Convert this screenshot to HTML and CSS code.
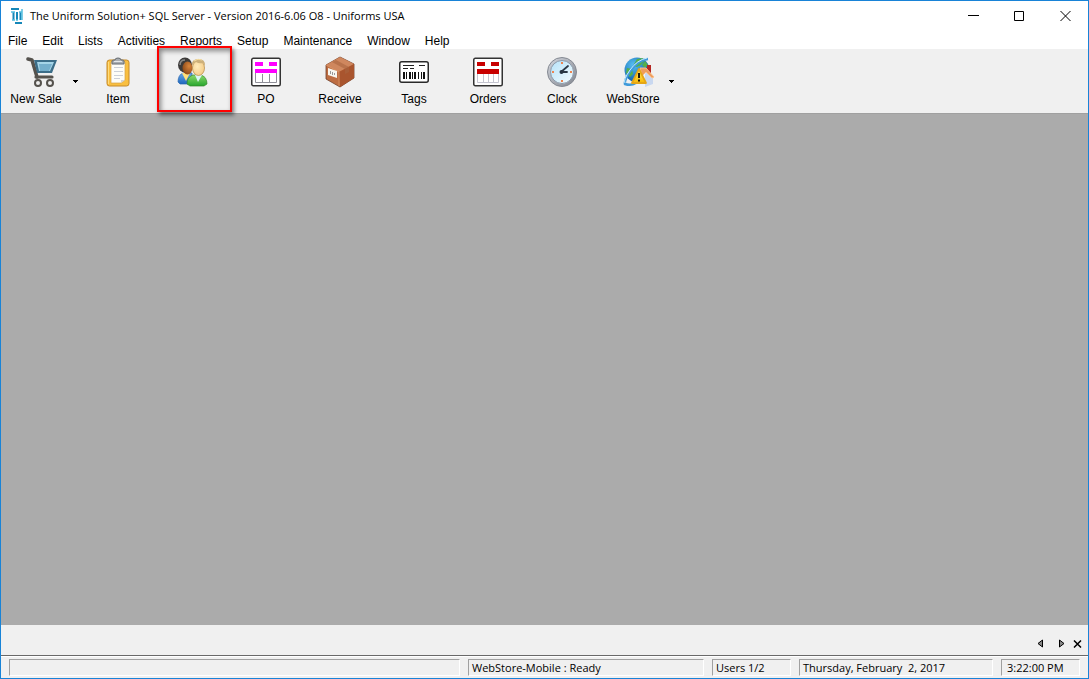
FILE: index.html
```
<!DOCTYPE html>
<html lang="en">
<head>
<meta charset="utf-8">
<title>The Uniform Solution+ SQL Server</title>
<link rel="stylesheet" href="styles.css">
</head>
<body>
<div class="window">
  <header class="titlebar">
    <svg class="app-icon" width="12" height="16" viewBox="0 0 12 16" fill="none" aria-hidden="true">
      <path d="M0 1h8M2.500 4v8M6 4v8M9.500 4v8M4 15h7" stroke="#1687b8" stroke-width="2" />
      <path d="M0 4h4M8 4h3M11 1v11M1 12h3M5 12h2" stroke="#54bfe0" stroke-width="1.500" />
    </svg>
    <h1 class="title">The Uniform Solution+ SQL Server - Version 2016-6.06 O8 - Uniforms USA</h1>
    <div class="caption-buttons">
      <button class="caption" aria-label="Minimize"><svg width="11" height="11" viewBox="0 0 11 11"><path d="M0 4.500h11" stroke="#000" /></svg></button>
      <button class="caption" aria-label="Maximize"><svg width="11" height="11" viewBox="0 0 11 11"><path d="M.5.5h9v9h-9z" fill="none" stroke="#000" /></svg></button>
      <button class="caption" aria-label="Close"><svg width="11" height="11" viewBox="0 0 11 11"><path d="M.5 0l10 10M10.500 0l-10 10" stroke="#000" /></svg></button>
    </div>
  </header>

  <nav class="menubar" aria-label="Main menu">
    <button class="menu">File</button>
    <button class="menu">Edit</button>
    <button class="menu">Lists</button>
    <button class="menu">Activities</button>
    <button class="menu">Reports</button>
    <button class="menu">Setup</button>
    <button class="menu">Maintenance</button>
    <button class="menu">Window</button>
    <button class="menu">Help</button>
  </nav>

  <div class="toolbar" role="toolbar" aria-label="Shortcuts">
    <button class="tool tool-split">
      <svg class="icon icon-shift" width="32" height="32" viewBox="0 0 32 32" aria-hidden="true">
        <path d="M2 3l4 1 5 17" fill="none" stroke="#55524d" stroke-width="3.500" stroke-linecap="round" stroke-linejoin="round" />
        <path d="M10 21h16" stroke="#55524d" stroke-width="3.200" stroke-linecap="round" />
        <path d="M8 4h23l-5 13H11z" fill="#3b6d88" />
        <path d="M11 6h17l-4 9H13z" fill="#a5d5e8" />
        <path d="M13 8h13l-3 7H14z" fill="#74afcc" />
        <circle cx="12" cy="27" r="3" fill="#eee" stroke="#55524d" stroke-width="2" />
        <circle cx="24" cy="27" r="3" fill="#eee" stroke="#55524d" stroke-width="2" />
      </svg>
      <span>New Sale</span>
    </button>
    <button class="drop" aria-label="New Sale options"><svg width="5" height="3" viewBox="0 0 5 3"><path d="M0 0h5v1H4v1H3v1H2V2H1V1H0z" /></svg></button>

    <button class="tool">
      <svg class="icon" width="32" height="32" viewBox="0 0 32 32" aria-hidden="true">
        <rect x="5" y="4" width="22" height="26" rx="2.500" fill="#f9bf40" stroke="#c58a2a" />
        <path d="M6.500 6v22" stroke="#ffdc7c" />
        <path d="M9 6h14v18l-4 3H9z" fill="#fdfdf8" stroke="#d4a045" stroke-width=".7" />
        <path d="M19 27v-3h4z" fill="#d5d5d5" />
        <path d="M12 11.500h9M12 15.500h9M12 19.500h9M12 22.500h6" stroke="#ccd0d8" />
        <path d="M10 8V5q0-1 2-1h1q0-2 3-2t3 2h1q2 0 2 1v3z" fill="#a8adb2" stroke="#666b70" />
        <path d="M12 5.500h8" stroke="#e5e8ea" />
      </svg>
      <span>Item</span>
    </button>

    <button class="tool tool-marked">
      <svg class="icon" width="32" height="32" viewBox="0 0 32 32" aria-hidden="true">
        <defs>
          <radialGradient id="skin-dark" cx=".65" cy=".35" r=".7"><stop stop-color="#d9853b" /><stop offset="1" stop-color="#8a4818" /></radialGradient>
          <radialGradient id="skin-light" cx=".4" cy=".4" r=".7"><stop stop-color="#ffebbb" /><stop offset="1" stop-color="#f3c982" /></radialGradient>
          <linearGradient id="blue-coat" x2="0" y2="1"><stop stop-color="#69a8e7" /><stop offset="1" stop-color="#1e66bd" /></linearGradient>
          <linearGradient id="green-coat" x2="0" y2="1"><stop stop-color="#8ad969" /><stop offset="1" stop-color="#26a52e" /></linearGradient>
        </defs>
        <path d="M2 26q0-7 5-9h9v11H4z" fill="url(#blue-coat)" stroke="#2b68af" stroke-width=".7" />
        <path d="M6 17l4 8 4-8z" fill="#ffe07b" />
        <ellipse cx="9" cy="9" rx="7" ry="7.500" fill="#3c3a39" />
        <ellipse cx="11.500" cy="12" rx="5" ry="6.500" fill="url(#skin-dark)" />
        <path d="M4 9q0-5 5-5" fill="none" stroke="#888" stroke-width="1.500" />
        <path d="M11 28q0-7 6-9h8q6 2 6 9l-3 2H14z" fill="url(#green-coat)" stroke="#36882c" stroke-width=".7" />
        <path d="M19 19l3 7 4-7z" fill="#d9f4f5" />
        <ellipse cx="22.500" cy="12" rx="6" ry="7.500" fill="url(#skin-light)" stroke="#b4873f" stroke-width=".7" />
        <path d="M16 10q-1-7 6.500-7 7 0 6.500 7l-2-3q-4 1-7-1-3 1-4 4z" fill="#cdb07a" />
        <path d="M18 5q4-3 8-1" fill="none" stroke="#f4dda0" />
      </svg>
      <span>Cust</span>
    </button>

    <button class="tool">
      <svg class="icon" width="32" height="32" viewBox="0 0 32 32" aria-hidden="true">
        <rect x="1.750" y="2.250" width="28.500" height="27.500" rx="1.500" fill="#fff" stroke="#333" stroke-width="1.500" />
        <path d="M5 6h8v4H5zM19 6h8v4h-8zM5 13h22v4H5z" fill="#f0f" />
        <path d="M5.500 17v9.500h21V17M12.500 18v8M19.500 18v8" fill="none" stroke="#8f8f98" />
      </svg>
      <span>PO</span>
    </button>

    <button class="tool">
      <svg class="icon" width="32" height="32" viewBox="0 0 32 32" aria-hidden="true">
        <path d="M2 9L16 1l14 7v14L16 31 2 23z" fill="#bd6d42" stroke="#71402b" stroke-width=".8" stroke-linejoin="round" />
        <path d="M2 9L16 1l14 7-15 8z" fill="#cf875e" />
        <path d="M15 16l15-8v14l-14 9z" fill="#a9552e" />
        <path d="M8 6l13 7v5l4-2v-5L12 4z" fill="#a8643f" opacity=".6" />
        <path d="M2 9l13 7v14" fill="none" stroke="#de9b6b" stroke-width=".7" />
        <path d="M4 12l9 3v7l-9-3z" fill="#f8f6ef" />
        <path d="M6.500 15v3M8.500 16v3M10.500 17v2" stroke="#999" />
      </svg>
      <span>Receive</span>
    </button>

    <button class="tool">
      <svg class="icon" width="32" height="32" viewBox="0 0 32 32" aria-hidden="true">
        <rect x="1.750" y="5.750" width="28.500" height="20.500" rx="2" fill="#fff" stroke="#292929" stroke-width="1.500" />
        <path d="M5 9.500h11M21 9.500h6M5 12.500h5M12 12.500h4" stroke="#222" stroke-width="1.200" />
        <path d="M6 16v7M12 16v7M17 16v7M26 16v7" stroke="#111" stroke-width="2" />
        <path d="M8.500 16v7M14.500 16v7M20.500 16v7M23.500 16v7" stroke="#111" />
      </svg>
      <span>Tags</span>
    </button>

    <button class="tool">
      <svg class="icon" width="32" height="32" viewBox="0 0 32 32" aria-hidden="true">
        <rect x="1.750" y="2.250" width="28.500" height="27.500" rx="1.500" fill="#fff" stroke="#333" stroke-width="1.500" />
        <path d="M5 6h8v4H5zM19 6h8v4h-8zM5 13h22v5H5z" fill="#c80000" />
        <path d="M5.500 18v8.500h21V18M11.500 18v8M16.500 18v8M21.500 18v8" fill="none" stroke="#c5c5d0" />
      </svg>
      <span>Orders</span>
    </button>

    <button class="tool">
      <svg class="icon" width="32" height="32" viewBox="0 0 32 32" aria-hidden="true">
        <defs>
          <linearGradient id="clock-rim" x2="1" y2="1"><stop stop-color="#d4d7de" /><stop offset="1" stop-color="#81858e" /></linearGradient>
          <linearGradient id="clock-face" x2="1" y2="1"><stop stop-color="#b5e2f8" /><stop offset="1" stop-color="#f4fcff" /></linearGradient>
        </defs>
        <circle cx="16" cy="16" r="14.500" fill="url(#clock-rim)" stroke="#858a93" />
        <circle cx="16" cy="16" r="11.500" fill="url(#clock-face)" stroke="#8c99a9" />
        <path d="M16 6v2M16 24v2M6 16h2M24 16h2" stroke="#ed8450" stroke-width="2" />
        <path d="M15 16l7-6M15 16h6" stroke="#2b3947" stroke-width="1.800" stroke-linecap="round" />
        <circle cx="15.500" cy="16" r="2" fill="#263543" />
      </svg>
      <span>Clock</span>
    </button>

    <button class="tool tool-split tool-store">
      <svg class="icon icon-shift" width="32" height="32" viewBox="0 0 32 32" aria-hidden="true">
        <defs>
          <radialGradient id="globe" cx=".35" cy=".3" r=".75"><stop stop-color="#58bff2" /><stop offset="1" stop-color="#0756a2" /></radialGradient>
          <linearGradient id="warning" x2="0" y2="1"><stop stop-color="#fff07a" /><stop offset="1" stop-color="#f9b800" /></linearGradient>
        </defs>
        <circle cx="14" cy="14" r="12.500" fill="url(#globe)" />
        <path d="M14 3l6-1 1 3-3 4-4 2-4-1zM4 12l5 1 1 5-3 3-4-4zM22 5l3 4-3 3-3-3z" fill="#55b04c" />
        <path d="M25 3Q15 4 8 14T2 28q6 2 11-1" fill="none" stroke="#3f9ada" stroke-width="2.500" />
        <path d="M24 2Q14 4 7 14T2 27" fill="none" stroke="#c9edff" />
        <path d="M24 9h4v8h-4z" fill="#b52622" />
        <path d="M12 20l9-7 9 8v7l-11 3-7-3z" fill="#edf2fb" />
        <path d="M24 15l6 6v7l-8 3V18z" fill="#c9d8f0" />
        <path d="M17 12h6l8 9-2 1-6-6-4 4z" fill="#ee9d5f" stroke="#fac08b" />
        <path d="M16 13l7 14H9z" fill="url(#warning)" stroke="#e5a616" stroke-width="1.800" stroke-linejoin="round" />
        <path d="M16 17v5M16 23.500v2" stroke="#1f1b0d" stroke-width="2" />
      </svg>
      <span>WebStore</span>
    </button>
    <button class="drop" aria-label="WebStore options"><svg width="5" height="3" viewBox="0 0 5 3"><path d="M0 0h5v1H4v1H3v1H2V2H1V1H0z" /></svg></button>
  </div>

  <main class="workspace"></main>

  <div class="tabstrip">
    <button class="tab-control" aria-label="Previous"><svg width="7" height="9" viewBox="0 0 7 9"><path d="M5.500 1v7L1 4.500z" fill="#888" stroke="#000" /></svg></button>
    <button class="tab-control" aria-label="Next"><svg width="7" height="9" viewBox="0 0 7 9"><path d="M1.500 1v7L6 4.500z" fill="#888" stroke="#000" /></svg></button>
    <button class="tab-control tab-close" aria-label="Close tab"><svg width="9" height="8" viewBox="0 0 9 8"><path d="M1 .5l7 7M8 .5l-7 7" stroke="#000" stroke-width="1.500" /></svg></button>
  </div>

  <footer class="statusbar">
    <div class="panel"></div>
    <div class="panel panel-store">WebStore-Mobile : Ready</div>
    <div class="panel panel-users">Users 1/2</div>
    <div class="panel panel-date">Thursday, February&nbsp; 2, 2017</div>
    <div class="panel panel-time">3:22:00 PM</div>
  </footer>
</div>
</body>
</html>
```
FILE: styles.css
```
* { box-sizing: border-box; }

body { margin: 0; }

button {
  border: 0;
  padding: 0;
  background: none;
  color: inherit;
  font: inherit;
}

svg { display: block; flex: none; }

.window {
  display: flex;
  flex-direction: column;
  min-height: 100vh;
  border: 1px solid #1883d7;
  background: #fff;
  color: #000;
  font: 12px/16px "Liberation Sans", Arial, sans-serif;
}

.titlebar {
  display: flex;
  align-items: center;
  height: 30px;
  padding-left: 10px;
}

.title {
  flex: 1;
  margin: 0 0 0 7px;
  font: 11px/16px "Open Sans", "Noto Sans", sans-serif;
  white-space: nowrap;
}

.caption-buttons { display: flex; }

.caption {
  display: grid;
  place-items: center;
  width: 46px;
  height: 30px;
}

.menubar {
  display: flex;
  gap: 15px;
  height: 18px;
  padding-left: 7px;
}

.menu { line-height: 20px; }

.toolbar {
  display: flex;
  height: 65px;
  background: #f0f0f0;
  border-bottom: 1px solid #a0a0a0;
}

.tool {
  position: relative;
  display: flex;
  flex-direction: column;
  align-items: center;
  gap: 3px;
  width: 74px;
  padding-top: 7px;
  white-space: nowrap;
}

.tool-split { width: 70px; }

.tool-store { width: 68px; }

.icon-shift { margin-left: 12px; }

.drop {
  display: grid;
  place-items: center;
  width: 10px;
}

.tool-split + .drop { margin: 0 1px 0 -1px; }

.tool-marked::after {
  content: "";
  position: absolute;
  inset: -3px -3px 1px 2px;
  border: 2px solid #f00;
  box-shadow: 2px 3px 4px #00000080, inset 2px 3px 5px #00000070;
}

.workspace { flex: 1; background: #ababab; }

.tabstrip {
  display: flex;
  justify-content: flex-end;
  align-items: center;
  gap: 14px;
  height: 30px;
  padding: 7px 6px 0 0;
  background: #f0f0f0;
}

.tab-close { margin-left: -6px; }

.statusbar {
  display: flex;
  gap: 8px;
  height: 23px;
  padding: 3px 8px 2px;
  border-top: 1px solid #696969;
  box-shadow: inset 0 1px #fff;
  background: #f0f0f0;
  font: 11px/16px "Open Sans", "Noto Sans", sans-serif;
}

.panel {
  flex: 1;
  height: 17px;
  padding-left: 3px;
  border: 1px solid;
  border-color: #a0a0a0 #fff #fff #a0a0a0;
  white-space: nowrap;
}

.panel-store { flex: 0 0 236px; }
.panel-users { flex: 0 0 79px; }
.panel-date { flex: 0 0 194px; }
.panel-time { flex: 0 0 79px; padding-left: 5px; }
```
